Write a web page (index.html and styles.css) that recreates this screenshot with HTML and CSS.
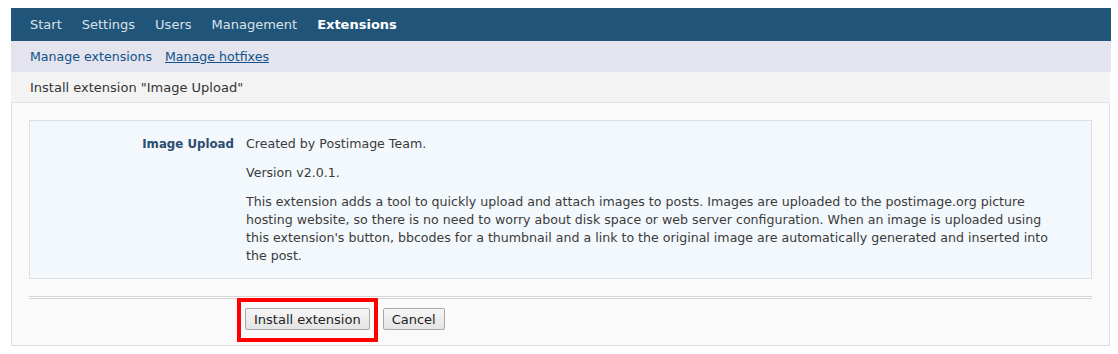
FILE: index.html
```html
<!DOCTYPE html>
<html lang="en">

<head>
	<meta charset="UTF-8">
	<title>Install extension</title>
	<link rel="stylesheet" href="styles.css">
</head>

<body>
	<div class="page">
		<nav class="tabs">
			<a href="#">Start</a>
			<a href="#">Settings</a>
			<a href="#">Users</a>
			<a href="#">Management</a>
			<a href="#" class="active">Extensions</a>
		</nav>
		<nav class="subtabs">
			<a href="#">Manage extensions</a>
			<a href="#" class="current">Manage hotfixes</a>
		</nav>
		<div class="title">Install extension "Image Upload"</div>
		<div class="panel">
			<dl class="details">
				<dt>Image Upload</dt>
				<dd>
					<p>Created by Postimage Team.</p>
					<p>Version v2.0.1.</p>
					<p>This extension adds a tool to quickly upload and attach images to posts. Images are uploaded to the postimage.org picture hosting website, so there is no need to worry about disk space or web server configuration. When an image is uploaded using this extension's button, bbcodes for a thumbnail and a link to the original image are automatically generated and inserted into the post.</p>
				</dd>
			</dl>
			<div class="submit">
				<span class="highlight"><button type="button" class="button">Install extension</button></span>
				<button type="button" class="button">Cancel</button>
			</div>
		</div>
	</div>
</body>

</html>
```

FILE: styles.css
```css
*,
*::before,
*::after {
	box-sizing: border-box;
}

body {
	margin: 0;
	padding: 8px 7px 0 11px;
	font-family: "DejaVu Sans", Verdana, sans-serif;
	font-size: 12.6px;
	color: #3b3b3b;
	background-color: #ffffff;
}

a {
	text-decoration: none;
}

.page {
	width: 1100px;
}

.tabs {
	display: flex;
	gap: 20px;
	height: 33px;
	align-items: center;
	padding: 0 19px;
	background-color: #215479;
	font-size: 13px;
}

.tabs a {
	color: #d8e2eb;
}

.tabs a.active {
	color: #ffffff;
	font-weight: bold;
}

.subtabs {
	display: flex;
	gap: 13px;
	height: 31px;
	align-items: center;
	padding: 0 19px;
	background-color: #e3e4ee;
	font-size: 12.6px;
}

.subtabs a {
	color: #105289;
}

.subtabs a.current {
	text-decoration: underline;
}

.title {
	height: 31px;
	display: flex;
	align-items: center;
	padding: 0 19px;
	background-color: #f3f3f3;
	border-bottom: 1px solid #dce3eb;
	font-size: 13px;
	color: #333333;
	width: 1099px;
}

.panel {
	width: 1099px;
	background-color: #fafafa;
	border: 1px solid #d9dfe6;
	border-top: none;
	padding: 17px 17px 15px;
}

.details {
	display: flex;
	margin: 0;
	padding: 14px 0 13px;
	background-color: #f3f8fc;
	border: 1px solid #dbe1e7;
	line-height: 18px;
}

.details dt {
	width: 204px;
	flex: none;
	text-align: right;
	font-size: 11.8px;
	font-weight: bold;
	color: #2b4d70;
}

.details dd {
	margin: 0 0 0 12px;
	padding-right: 24px;
}

.details p {
	margin: 0 0 11px;
}

.details p:last-child {
	margin-bottom: 0;
}

.submit {
	margin-top: 17px;
	border-top: 3px double #d6d6d6;
	padding: 9px 0 0 216px;
	display: flex;
	align-items: center;
	gap: 13px;
}

.highlight {
	position: relative;
	display: inline-flex;
}

.highlight::after {
	content: '';
	position: absolute;
	top: -10px;
	right: -8px;
	bottom: -12px;
	left: -8px;
	border: 4px solid #ff0000;
	pointer-events: none;
}

.button {
	height: 22px;
	padding: 0 8px;
	font-family: inherit;
	font-size: 13px;
	color: #222222;
	background: linear-gradient(#f6f6f6, #e4e4e4);
	border: 1px solid #a9a9a9;
	border-radius: 2px;
}
```
